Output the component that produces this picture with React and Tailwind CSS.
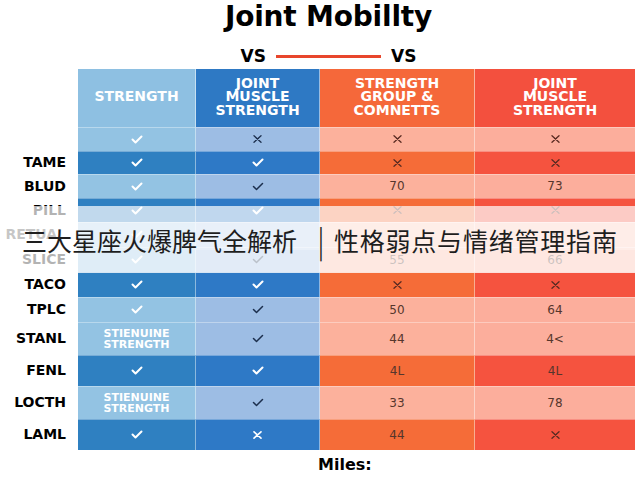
import React from "react";

const GRID = "grid grid-cols-[78px_118px_124px_155px_160px]";
const LIGHT = ["bg-[#93c3e3]", "bg-[#9dbde4]", "bg-[#fcb19c]", "bg-[#fcae9c]"];
const DARK = ["bg-[#2f80c1]", "bg-[#2e79c6]", "bg-[#f56c38]", "bg-[#f5533f]"];

function Check({ color = "#ffffff", w = 2 }) {
  return (
    <svg width="12" height="9" viewBox="0 0 12 9" fill="none">
      <path d="M1.5 4.5 L4.5 7.5 L10.5 1.5" stroke={color} strokeWidth={w} strokeLinecap="round" strokeLinejoin="round" />
    </svg>
  );
}

function Cross({ color = "#5a2b22", w = 1.3 }) {
  return (
    <svg width="9" height="8" viewBox="0 0 9 8" fill="none">
      <path d="M1 0.8 L8 7.2 M8 0.8 L1 7.2" stroke={color} strokeWidth={w} strokeLinecap="round" />
    </svg>
  );
}

function Cell({ c }) {
  if (c.k === "cw") return <Check />;
  if (c.k === "cn") return <Check color="#1c2f4d" w={1.5} />;
  if (c.k === "xd") return <Cross />;
  if (c.k === "xn") return <Cross color="#1c2f4d" />;
  if (c.k === "xw") return <Cross color="#ffffff" w={1.6} />;
  if (c.k === "s")
    return (
      <div className="text-center text-[11px] leading-[11px] font-bold text-white">
        STIENUINE
        <br />
        STRENGTH
      </div>
    );
  return <span className="text-[12px] text-[#56362c]">{c.v}</span>;
}

const cw = { k: "cw" };
const cn = { k: "cn" };
const xd = { k: "xd" };
const xn = { k: "xn" };
const xw = { k: "xw" };
const st = { k: "s" };
const n = (v) => ({ k: "n", v });

const ROWS = [
  { label: "", t: "l", h: "h-[24px]", c: [cw, xn, xd, xd] },
  { label: "TAME", t: "d", h: "h-[23px]", c: [cw, cw, xd, xd] },
  { label: "BLUD", t: "l", h: "h-[24px]", c: [cw, cn, n("70"), n("73")] },
  { label: "PILL", t: "d", h: "h-[24px]", c: [cw, cw, xd, xd] },
  { label: "RETUAL", t: "l", h: "h-[25px]", c: [cw, cn, xd, xd] },
  { label: "SLICE", t: "l", h: "h-[25px]", c: [cw, cn, n("55"), n("66")] },
  { label: "TACO", t: "d", h: "h-[25px]", c: [cw, cw, xd, xd] },
  { label: "TPLC", t: "l", h: "h-[25px]", c: [cw, cn, n("50"), n("64")] },
  { label: "STANL", t: "l", h: "h-[33px]", c: [st, cn, n("44"), n("4<")] },
  { label: "FENL", t: "d", h: "h-[31px]", c: [cw, cw, n("4L"), n("4L")] },
  { label: "LOCTH", t: "l", h: "h-[33px]", c: [st, cn, n("33"), n("78")] },
  { label: "LAML", t: "d", h: "h-[31px]", c: [cw, xw, n("44"), xd] },
];

export default function App() {
  return (
    <div className="relative w-[640px] h-[480px] overflow-hidden bg-white font-['DejaVu_Sans',sans-serif] text-black">
      <div className="pt-[1px] h-[33px] pl-[17px] flex justify-center">
        <h1 className="text-[28px] leading-[32px] font-bold tracking-[-0.2px]">Joint Mobillty</h1>
      </div>
      <div className="mt-[12px] h-[22px] pl-[17px] flex items-center justify-center">
        <span className="text-[17px] leading-[22px] font-bold">VS</span>
        <span className="mx-[10px] w-[105px] h-[3px] bg-[#e8462c]" />
        <span className="text-[17px] leading-[22px] font-bold">VS</span>
      </div>

      <div className="mt-[2px]">
        <div className={GRID + " h-[58px]"}>
          <div />
          <div className="bg-[#8ec0e2] border-r border-white/50 flex items-center justify-center text-white font-bold text-[14px] pb-[3px]">
            STRENGTH
          </div>
          <div className="bg-[#2e79c4] border-r border-white/50 flex items-center justify-center text-center text-white font-bold text-[14px] leading-[13.5px] pb-[2px]">
            JOINT<br />MUSCLE<br />STRENGTH
          </div>
          <div className="bg-[#f5683a] border-r border-white/50 flex items-center justify-center text-center text-white font-bold text-[14px] leading-[13.5px] pb-[2px]">
            STRENGTH<br />GROUP &amp;<br />COMNETTS
          </div>
          <div className="bg-[#f3503e] flex items-center justify-center text-center text-white font-bold text-[14px] leading-[13.5px] pb-[2px]">
            JOINT<br />MUSCLE<br />STRENGTH
          </div>
        </div>

        {ROWS.map((r, i) => {
          const bg = r.t === "l" ? LIGHT : DARK;
          return (
            <div key={i} className={GRID + " " + r.h}>
              <div className="flex items-center justify-end pr-[12px] text-[14px] font-bold">{r.label}</div>
              {r.c.map((c, j) => (
                <div
                  key={j}
                  className={
                    bg[j] +
                    " flex items-center justify-center shadow-[inset_0_1px_0_rgba(255,255,255,0.35)]" +
                    (j < 3 ? " border-r border-white/45" : "")
                  }
                >
                  <Cell c={c} />
                </div>
              ))}
            </div>
          );
        })}
      </div>

      <div className="mt-[5px] h-[20px] pl-[318px] text-[16px] leading-[20px] font-bold">Miles:</div>

      <div className="absolute left-0 top-[206px] w-[640px] h-[67px] bg-white/70" />
      <div className="absolute left-0 top-[222px] w-[640px] h-[28px] bg-white/25" />
      <div className="absolute left-[22px] top-[222px] h-[36px] flex items-center whitespace-nowrap font-['Noto_Sans_CJK_SC',sans-serif] text-[25px] leading-[36px] text-[#1e1e1e]">
        <span>三大星座火爆脾气全解析</span>
        <span className="ml-[20px] mr-[9px] text-[31px] leading-[36px] font-light">|</span>
        <span className="tracking-[0.8px]">性格弱点与情绪管理指南</span>
      </div>
    </div>
  );
}
